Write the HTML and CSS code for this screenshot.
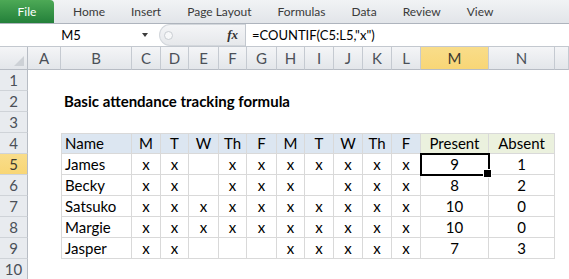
FILE: index.html
```html
<!DOCTYPE html>
<html lang="en">
<head>
    <meta charset="UTF-8">
    <title>Basic attendance tracking formula</title>
    <link rel="stylesheet" href="styles.css">
</head>
<body>
    <header class="ribbon">
        <div class="tab file">File</div>
        <div class="tab first">Home</div>
        <div class="tab">Insert</div>
        <div class="tab">Page Layout</div>
        <div class="tab">Formulas</div>
        <div class="tab">Data</div>
        <div class="tab">Review</div>
        <div class="tab">View</div>
    </header>

    <div class="formula-bar">
        <div class="name-box">
            <span class="ref">M5</span>
            <span class="arrow"></span>
        </div>
        <div class="fx-area">
            <span class="knob"></span>
            <span class="fx">fx</span>
        </div>
        <div class="formula">=COUNTIF(C5:L5,"x")</div>
    </div>

    <!-- Worksheet grid, built from the data below -->
    <div id="sheet" class="sheet"></div>

    <script>
        const letters = ['A', 'B', 'C', 'D', 'E', 'F', 'G', 'H', 'I', 'J', 'K', 'L', 'M', 'N', ''];
        const days = ['M', 'T', 'W', 'Th', 'F', 'M', 'T', 'W', 'Th', 'F'];
        const people = [
            ['James', 'xx.xxxxxxx'],
            ['Becky', 'xx.xxx.xxx'],
            ['Satsuko', 'xxxxxxxxxx'],
            ['Margie', 'xxxxxxxxxx'],
            ['Jasper', 'xx...xxxxx']
        ];
        const activeRow = 5;
        const activeCol = 'M';

        const sheet = document.getElementById('sheet');

        function cell(text, cls) {
            const el = document.createElement('div');
            el.className = 'cell ' + (cls || '');
            el.textContent = text === undefined ? '' : String(text);
            return el;
        }

        function addRow(head, cells, rowClass) {
            const row = document.createElement('div');
            row.className = 'sheet-row ' + (rowClass || '');
            row.appendChild(head);
            cells.forEach(c => row.appendChild(c));
            sheet.appendChild(row);
        }

        // column headers
        const corner = document.createElement('div');
        corner.className = 'corner';
        corner.innerHTML = '<span class="corner-mark"></span>';
        addRow(corner, letters.map(l => {
            const el = document.createElement('div');
            el.className = 'col-head' + (l === activeCol ? ' sel' : '');
            el.textContent = l;
            return el;
        }), 'head-row');

        function rowHead(n) {
            const el = document.createElement('div');
            el.className = 'row-head' + (n === activeRow ? ' sel' : '');
            el.textContent = n;
            return el;
        }

        function blanks(count) {
            return Array.from({ length: count }, () => cell(''));
        }

        addRow(rowHead(1), blanks(15));
        addRow(rowHead(2), [cell(''), cell('Basic attendance tracking formula', 'title')].concat(blanks(13)));
        addRow(rowHead(3), blanks(15));

        // table header
        const header = [cell(''), cell('Name', 't top left blue')];
        days.forEach(d => header.push(cell(d, 't top c blue')));
        header.push(cell('Present', 't top c green'), cell('Absent', 't top c green'), cell(''));
        addRow(rowHead(4), header);

        people.forEach((p, i) => {
            const n = i + 5;
            const marks = p[1].split('');
            const present = marks.filter(m => m === 'x').length;
            const cells = [cell(''), cell(p[0], 't left')];
            marks.forEach(m => cells.push(cell(m === 'x' ? 'x' : '', 't c')));
            cells.push(cell(present, 't c' + (n === activeRow ? ' active' : '')));
            cells.push(cell(marks.length - present, 't c'));
            cells.push(cell(''));
            addRow(rowHead(n), cells);
        });

        addRow(rowHead(10), blanks(15));
    </script>
</body>
</html>
```

FILE: styles.css
```css
:root {
    --grid-line: #d9d9d9;
    --head-line: #c5cad1;
    --head-text: #4b5058;
    --select: #f8d676;
    --table-blue: #dce6f1;
    --table-green: #ebf1de;
}

* {
    box-sizing: border-box;
    margin: 0;
    padding: 0;
}

body {
    font-family: 'Lato', sans-serif;
    background-color: #ffffff;
    color: #000000;
    width: 569px;
    height: 279px;
    overflow: hidden;
}

/* Ribbon tabs */
.ribbon {
    display: flex;
    height: 24px;
    background: linear-gradient(#f1f3f5, #e2e5e9);
    border-bottom: 1px solid #aeb4bd;
}

.tab {
    font-size: 12px;
    line-height: 23px;
    color: #3a3a3a;
    padding: 0 13px;
}

.tab.file {
    width: 54px;
    padding: 0;
    text-align: center;
    color: #ffffff;
    background: linear-gradient(#4da956, #23803a);
    border-top-right-radius: 4px;
}

.tab.first {
    margin-left: 6px;
}

/* Formula bar */
.formula-bar {
    display: flex;
    height: 23px;
    background-color: #ffffff;
    border-bottom: 1px solid #c3c8cf;
}

.name-box {
    width: 159px;
    display: flex;
    align-items: center;
    font-size: 13px;
}

.name-box .ref {
    width: 142px;
    text-align: center;
}

.name-box .arrow {
    width: 0;
    height: 0;
    border-left: 3px solid transparent;
    border-right: 3px solid transparent;
    border-top: 4px solid #3c3c3c;
}

.fx-area {
    width: 86px;
    display: flex;
    align-items: center;
    justify-content: space-between;
    padding: 0 7px 0 4px;
    background: linear-gradient(#f4f5f7, #e6e8eb);
    border: 1px solid #d3d7dc;
    border-right: none;
    border-radius: 11px 0 0 11px;
}

.knob {
    width: 9px;
    height: 9px;
    border-radius: 50%;
    border: 1px solid #c9cdd2;
    background: #f7f8f9;
}

.fx {
    font-family: 'Liberation Serif', serif;
    font-style: italic;
    font-weight: bold;
    font-size: 13px;
    color: #333333;
}

.formula {
    flex: 1;
    border-left: 1px solid #c3c8cf;
    padding-left: 6px;
    font-size: 13px;
    line-height: 22px;
}

/* Worksheet */
.sheet-row {
    display: grid;
    grid-template-columns: 28px 33px 71px 29px 28px 30px 28px 30px 28px 29px 29px 29px 29px 68px 66px 14px;
    height: 21px;
}

.sheet-row.head-row {
    height: 23px;
}

.corner {
    display: flex;
    align-items: flex-end;
    justify-content: flex-end;
    padding: 0 3px 3px 0;
    background: linear-gradient(#f4f5f7, #e3e6ea);
    border-right: 1px solid #b7bcc4;
    border-bottom: 1px solid #b7bcc4;
}

.corner-mark {
    width: 0;
    height: 0;
    border-left: 10px solid transparent;
    border-bottom: 10px solid #cdd1d6;
}

.col-head {
    font-size: 15px;
    line-height: 22px;
    text-align: center;
    color: var(--head-text);
    background: linear-gradient(#f4f5f7, #e3e6ea);
    border-right: 1px solid var(--head-line);
    border-bottom: 1px solid #b7bcc4;
}

.row-head {
    font-size: 15px;
    line-height: 20px;
    text-align: center;
    color: var(--head-text);
    background-color: #e8ebef;
    border-right: 1px solid #b7bcc4;
    border-bottom: 1px solid #cfd3d8;
}

.col-head.sel,
.row-head.sel {
    background: linear-gradient(#f9dd8a, var(--select));
    color: #3d3a30;
}

.cell {
    font-size: 15px;
    line-height: 20px;
    padding: 0 3px;
    white-space: nowrap;
}

.cell.c {
    text-align: center;
}

.cell.t {
    border-right: 1px solid var(--grid-line);
    border-bottom: 1px solid var(--grid-line);
}

.cell.top {
    border-top: 1px solid var(--grid-line);
    line-height: 19px;
}

.cell.left {
    border-left: 1px solid var(--grid-line);
}

.blue {
    background-color: var(--table-blue);
}

.green {
    background-color: var(--table-green);
}

.title {
    font-weight: bold;
    font-size: 15px;
}

.active {
    position: relative;
    outline: 2px solid #000000;
    outline-offset: -1px;
}

.active::after {
    content: '';
    position: absolute;
    right: -4px;
    bottom: -4px;
    width: 7px;
    height: 7px;
    background-color: #000000;
    border: 1px solid #ffffff;
    z-index: 2;
}
```
